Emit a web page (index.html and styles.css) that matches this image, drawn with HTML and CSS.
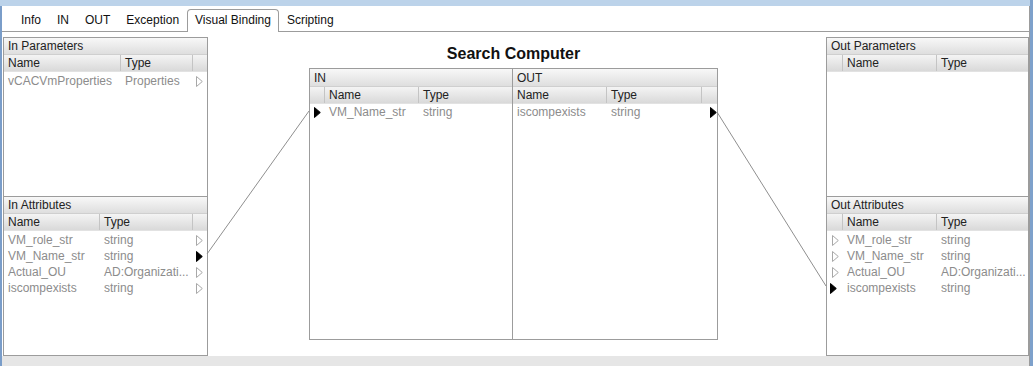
FILE: index.html
```
<!DOCTYPE html>
<html lang="en">
<head>
    <meta charset="UTF-8">
    <meta name="viewport" content="width=device-width, initial-scale=1.0">
    <title>Visual Binding</title>
    <link rel="stylesheet" href="styles.css">
</head>
<body>
<div class="window">
  <div class="frame">
    <div class="tabs">
        <span class="tab">Info</span>
        <span class="tab">IN</span>
        <span class="tab">OUT</span>
        <span class="tab">Exception</span>
        <span class="tab active">Visual Binding</span>
        <span class="tab">Scripting</span>
    </div>

    <div class="canvas">
        <div class="side">
            <div class="panel top">
                <div class="panel-title">In Parameters</div>
                <div class="row head cols-params"><span>Name</span><span>Type</span><span></span></div>
                <div class="row cols-params">
                    <span>vCACVmProperties</span><span>Properties</span>
                    <span class="pin-cell"><svg class="pin" viewBox="0 0 7 11"><path d="M.5 .5 L6.3 5.5 L.5 10.5Z"/></svg></span>
                </div>
            </div>
            <div class="panel bottom">
                <div class="panel-title">In Attributes</div>
                <div class="row head cols-attrs"><span>Name</span><span>Type</span><span></span></div>
                <div class="row cols-attrs">
                    <span>VM_role_str</span><span>string</span>
                    <span class="pin-cell"><svg class="pin" viewBox="0 0 7 11"><path d="M.5 .5 L6.3 5.5 L.5 10.5Z"/></svg></span>
                </div>
                <div class="row cols-attrs">
                    <span>VM_Name_str</span><span>string</span>
                    <span class="pin-cell"><svg class="pin bound" viewBox="0 0 7 11"><path d="M.5 .5 L6.3 5.5 L.5 10.5Z"/></svg></span>
                </div>
                <div class="row cols-attrs">
                    <span>Actual_OU</span><span>AD:Organizati...</span>
                    <span class="pin-cell"><svg class="pin" viewBox="0 0 7 11"><path d="M.5 .5 L6.3 5.5 L.5 10.5Z"/></svg></span>
                </div>
                <div class="row cols-attrs">
                    <span>iscompexists</span><span>string</span>
                    <span class="pin-cell"><svg class="pin" viewBox="0 0 7 11"><path d="M.5 .5 L6.3 5.5 L.5 10.5Z"/></svg></span>
                </div>
            </div>
        </div>

        <div class="center">
            <div class="title">Search Computer</div>
            <div class="action">
                <div class="half in">
                    <div class="panel-title">IN</div>
                    <div class="row head cols-in"><span></span><span>Name</span><span>Type</span></div>
                    <div class="row cols-in">
                        <span class="pin-cell"><svg class="pin bound" viewBox="0 0 7 11"><path d="M.5 .5 L6.3 5.5 L.5 10.5Z"/></svg></span>
                        <span>VM_Name_str</span><span>string</span>
                    </div>
                </div>
                <div class="half out">
                    <div class="panel-title">OUT</div>
                    <div class="row head cols-out"><span>Name</span><span>Type</span><span></span></div>
                    <div class="row cols-out">
                        <span>iscompexists</span><span>string</span>
                        <span class="pin-cell"><svg class="pin bound" viewBox="0 0 7 11"><path d="M.5 .5 L6.3 5.5 L.5 10.5Z"/></svg></span>
                    </div>
                </div>
            </div>
        </div>

        <div class="side right">
            <div class="panel top">
                <div class="panel-title">Out Parameters</div>
                <div class="row head cols-right"><span></span><span>Name</span><span>Type</span></div>
            </div>
            <div class="panel bottom">
                <div class="panel-title">Out Attributes</div>
                <div class="row head cols-right"><span></span><span>Name</span><span>Type</span></div>
                <div class="row cols-right">
                    <span class="pin-cell"><svg class="pin" viewBox="0 0 7 11"><path d="M.5 .5 L6.3 5.5 L.5 10.5Z"/></svg></span>
                    <span>VM_role_str</span><span>string</span>
                </div>
                <div class="row cols-right">
                    <span class="pin-cell"><svg class="pin" viewBox="0 0 7 11"><path d="M.5 .5 L6.3 5.5 L.5 10.5Z"/></svg></span>
                    <span>VM_Name_str</span><span>string</span>
                </div>
                <div class="row cols-right">
                    <span class="pin-cell"><svg class="pin" viewBox="0 0 7 11"><path d="M.5 .5 L6.3 5.5 L.5 10.5Z"/></svg></span>
                    <span>Actual_OU</span><span>AD:Organizati...</span>
                </div>
                <div class="row cols-right">
                    <span class="pin-cell"><svg class="pin bound" viewBox="0 0 7 11"><path d="M.5 .5 L6.3 5.5 L.5 10.5Z"/></svg></span>
                    <span>iscompexists</span><span>string</span>
                </div>
            </div>
        </div>

        <!-- binding wires, canvas coordinates -->
        <svg class="links" width="1027" height="324">
            <line x1="205" y1="222" x2="307" y2="79"/>
            <line x1="715" y1="80" x2="824" y2="254"/>
        </svg>
    </div>

    <div class="status"></div>
  </div>
</div>
</body>
</html>
```

FILE: styles.css
```
* {
    box-sizing: border-box;
}
body {
    margin: 0;
    font-family: "Liberation Sans", Arial, sans-serif;
    font-size: 12px;
}
.window {
    width: 1033px;
    height: 366px;
    padding-top: 6px;
    background: #bcd3ea;
    border-right: 3px solid #7ea1cb;
    overflow: hidden;
}
.frame {
    width: 1030px;
    height: 360px;
    background: #fff;
    border-left: 2px solid #7a9dc9;
    border-right: 1px solid #9c9c9c;
    display: flex;
    flex-direction: column;
}

/* tabs */
.tabs {
    height: 26px;
    display: flex;
    align-items: flex-end;
    padding-left: 11px;
    border-bottom: 1px solid #9c9c9c;
}
.tab {
    height: 22px;
    line-height: 21px;
    padding: 0 7px;
    border: 1px solid transparent;
    border-bottom: none;
    color: #111;
}
.tab.active {
    background: #fff;
    border-color: #9c9c9c;
    border-radius: 4px 4px 0 0;
    height: 23px;
    margin-bottom: -1px;
}

/* binding canvas */
.canvas {
    position: relative;
    height: 324px;
    display: flex;
}
.side {
    width: 205px;
    margin-left: 1px;
    padding-top: 5px;
    display: flex;
    flex-direction: column;
}
.side.right {
    width: 203px;
    margin-left: auto;
}
.panel {
    border: 1px solid #9c9c9c;
    background: #fff;
}
.panel.top {
    height: 160px;
}
.panel.bottom {
    height: 159px;
    border-top: none;
}
.panel-title {
    height: 17px;
    line-height: 17px;
    padding-left: 4px;
    color: #222;
    background: linear-gradient(#f8f8f8, #dedede);
    border-bottom: 1px solid #cfcfcf;
}
.row {
    display: grid;
    height: 16px;
    line-height: 16px;
    color: #8c8c8c;
    white-space: nowrap;
}
.row span {
    padding-left: 4px;
    overflow: hidden;
}
.row.head {
    height: 17px;
    line-height: 16px;
    color: #222;
    background: linear-gradient(#f4f4f4, #d9d9d9);
    border-bottom: 1px solid #e2e2e2;
    margin-bottom: 1px;
}
.row.head span {
    border-right: 1px solid #c4c4c4;
}
.row.head span:last-child {
    border-right: none;
}
.cols-params { grid-template-columns: 117px 72px 1fr; }
.cols-attrs { grid-template-columns: 96px 93px 1fr; }
.cols-right { grid-template-columns: 16px 94px 1fr; }
.cols-in { grid-template-columns: 15px 94px 1fr; }
.cols-out { grid-template-columns: 94px 95px 1fr; }

.row span.pin-cell {
    padding-left: 3px;
    display: flex;
    align-items: center;
}
.cols-right span.pin-cell {
    padding-left: 5px;
}
.pin {
    width: 7px;
    height: 11px;
    fill: none;
    stroke: #a8a8a8;
    stroke-width: 1;
}
.pin.bound {
    fill: #000;
    stroke: #000;
}
.cols-right .pin.bound {
    margin-left: -2px;
}

/* action box */
.center {
    margin-left: 101px;
    display: flex;
    flex-direction: column;
}
.title {
    margin-top: 11px;
    height: 25px;
    line-height: 22px;
    text-align: center;
    font-size: 16px;
    font-weight: bold;
    color: #111;
}
.action {
    width: 409px;
    height: 272px;
    border: 1px solid #9c9c9c;
    display: flex;
}
.half {
    flex: 1;
}
.half .panel-title {
    height: 18px;
    line-height: 19px;
}
.half .row.head {
    margin-bottom: 0;
}
.half.in {
    flex: 0 0 203px;
    border-right: 1px solid #9c9c9c;
}
.half.in .row span.pin-cell {
    padding-left: 4px;
}
.half.out .row span.pin-cell {
    padding-left: 8px;
}

.links {
    position: absolute;
    left: 0;
    top: 0;
    pointer-events: none;
}
.links line {
    stroke: #8f8f8f;
    stroke-width: 1;
}

.status {
    height: 10px;
    background: #e6e6e6;
}
```
